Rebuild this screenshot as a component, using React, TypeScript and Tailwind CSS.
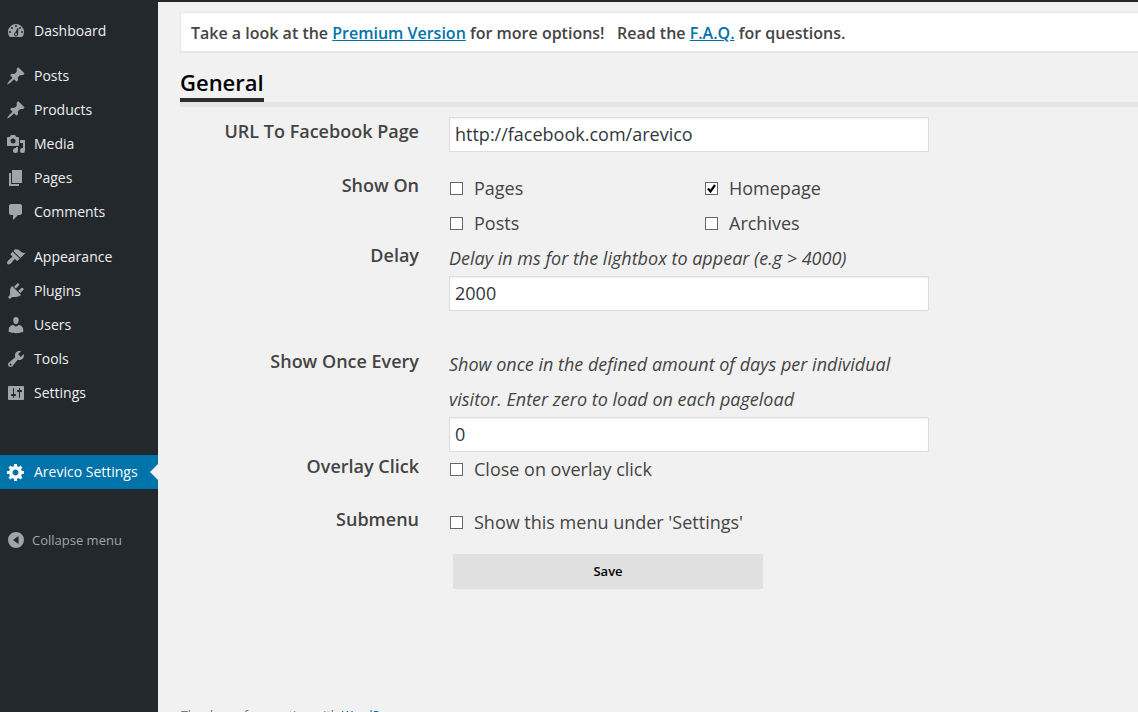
import { useState } from "react";
import type { ReactNode } from "react";

const ICONS = {
  dashboard:
    "M3.760 16h12.480A8 8 0 1 0 3.760 16zM10 4a1 1 0 1 1 0 2 1 1 0 0 1 0-2zM6 6a1 1 0 1 1 0 2 1 1 0 0 1 0-2zM14 6a1 1 0 1 1 0 2 1 1 0 0 1 0-2zM4 10a1 1 0 1 1 0 2 1 1 0 0 1 0-2zM16 10a1 1 0 1 1 0 2 1 1 0 0 1 0-2zM11.600 7l.9.3-.5 5.500a2 2 0 1 1-2.800-1.200zM10 12.200a1.100 1.100 0 1 0 .01 0z",
  pin: "M10.440 3.020l1.820-1.820 6.360 6.350-1.830 1.820c-1.050-.68-2.480-.57-3.410.36l-.75.75c-.92.93-1.040 2.350-.35 3.410l-1.830 1.820-2.410-2.410-2.800 2.790c-.42.42-3.380 2.710-3.800 2.290s1.860-3.390 2.280-3.810l2.790-2.790L4.100 9.360l1.830-1.820c1.050.69 2.480.57 3.400-.36l.75-.75c.93-.92 1.050-2.350.36-3.410z",
  media:
    "M13 11V4c0-.55-.45-1-1-1h-1.670L9 1H5L3.670 3H2c-.55 0-1 .45-1 1v7c0 .55.45 1 1 1h10c.55 0 1-.45 1-1zM7 4.500a2.500 2.500 0 1 1 0 5 2.500 2.500 0 0 1 0-5zM14 6h5v10.500a2.500 2.500 0 1 1-2-2.450V9h-3zM10 14.050V13h2v3.500a2.500 2.500 0 1 1-2-2.450z",
  page: "M6 15V2h10v13H6zm-1 1h8v2H3V5h2v11z",
  comment:
    "M5 2h9c1.100 0 2 .9 2 2v7c0 1.100-.9 2-2 2h-2l-5 5v-5H5c-1.100 0-2-.9-2-2V4c0-1.100.9-2 2-2z",
  appearance:
    "M14.480 11.060L7.410 3.990l1.500-1.500c.5-.56 2.300-.47 3.510.32 1.210.8 1.430 1.280 2.910 2.100 1.180.64 2.450 1.260 4.450.85zm-.71.71L6.700 4.700 4.930 6.470c-.39.39-.39 1.020 0 1.410l1.060 1.060c.39.39.39 1.030 0 1.420-.6.6-1.430 1.110-2.210 1.690-.35.26-.7.53-1.010.84C1.430 14.230.4 16.080 1.400 17.070c.99 1 2.840-.03 4.180-1.360.31-.31.58-.66.85-1.020.57-.78 1.080-1.610 1.690-2.210.39-.39 1.020-.39 1.410 0l1.060 1.060c.39.39 1.020.39 1.410 0z",
  plugin:
    "M13.110 4.360L9.870 7.600 8 5.730l3.240-3.240c.35-.34 1.050-.2 1.560.32.52.51.66 1.210.31 1.550zm-8 1.770l.91-1.120 9.010 9.010-1.190.84c-.71.71-2.630 1.160-3.820 1.160H6.140L4.900 17.260c-.59.59-1.540.59-2.120 0-.59-.58-.59-1.530 0-2.120l1.240-1.240v-3.880c0-1.130.4-3.190 1.090-3.890zm7.260 3.970l3.240-3.240c.34-.35 1.040-.21 1.550.31.52.51.66 1.210.31 1.550l-3.240 3.250z",
  user: "M10 9.250c-2.270 0-2.730-3.440-2.730-3.440C7 4.020 7.820 2 9.970 2c2.160 0 2.980 2.020 2.710 3.810 0 0-.41 3.440-2.680 3.440zm0 2.570L12.720 10c2.390 0 4.520 2.330 4.520 4.530v2.490s-3.650 1.130-7.240 1.130c-3.650 0-7.240-1.130-7.240-1.130v-2.490c0-2.250 1.940-4.480 4.470-4.480z",
  tool: "M16.680 9.770c-1.340 1.340-3.300 1.670-4.950.99l-5.410 6.520c-.99.99-2.590.99-3.580 0s-.99-2.590 0-3.570l6.520-5.420c-.68-1.650-.35-3.610.99-4.950 1.280-1.280 3.120-1.620 4.720-1.060l-2.890 2.890 2.820 2.820 2.860-2.870c.53 1.580.18 3.390-1.080 4.650zM3.810 16.210c.4.39 1.040.39 1.430 0 .4-.4.4-1.040 0-1.430-.39-.4-1.030-.4-1.430 0-.39.39-.39 1.030 0 1.430z",
  settings:
    "M18 16V4c0-.55-.45-1-1-1H3c-.55 0-1 .45-1 1v12c0 .55.45 1 1 1h14c.55 0 1-.45 1-1zM8 11h1c.55 0 1 .45 1 1s-.45 1-1 1H8v1.500c0 .28-.22.5-.5.5s-.5-.22-.5-.5V13H6c-.55 0-1-.45-1-1s.45-1 1-1h1V5.500c0-.28.22-.5.5-.5s.5.22.5.5V11zm5-2h-1c-.55 0-1-.45-1-1s.45-1 1-1h1V5.500c0-.28.22-.5.5-.5s.5.22.5.5V7h1c.55 0 1 .45 1 1s-.45 1-1 1h-1v5.500c0 .28-.22.5-.5.5s-.5-.22-.5-.5V9z",
  gear: "M18 12h-2.180c-.17.7-.44 1.350-.81 1.930l1.540 1.540-2.100 2.100-1.540-1.540c-.58.36-1.230.63-1.910.79V19H8v-2.180c-.68-.16-1.330-.43-1.910-.79l-1.540 1.540-2.120-2.120 1.540-1.540c-.36-.58-.63-1.230-.79-1.910H1V9.030h2.170c.16-.7.44-1.350.8-1.940L2.430 5.550l2.100-2.100 1.540 1.540c.58-.37 1.240-.64 1.930-.81V2h3v2.180c.68.16 1.330.43 1.910.79l1.540-1.540 2.120 2.120-1.540 1.540c.36.59.64 1.240.8 1.940H18V12zm-8.500 1.500c1.660 0 3-1.340 3-3s-1.340-3-3-3-3 1.340-3 3 1.340 3 3 3z",
  collapse: "M10 2a8 8 0 1 1 0 16 8 8 0 0 1 0-16zM12.500 6L7 10l5.500 4z",
};

type IconName = keyof typeof ICONS;

function Icon({ name }: { name: IconName }) {
  return (
    <svg viewBox="0 0 20 20" className="size-5 shrink-0" fill="currentColor" fillRule="evenodd" aria-hidden="true">
      <path d={ICONS[name]} />
    </svg>
  );
}

const MENU: { icon: IconName; label: string }[][] = [
  [{ icon: "dashboard", label: "Dashboard" }],
  [
    { icon: "pin", label: "Posts" },
    { icon: "pin", label: "Products" },
    { icon: "media", label: "Media" },
    { icon: "page", label: "Pages" },
    { icon: "comment", label: "Comments" },
  ],
  [
    { icon: "appearance", label: "Appearance" },
    { icon: "plugin", label: "Plugins" },
    { icon: "user", label: "Users" },
    { icon: "tool", label: "Tools" },
    { icon: "settings", label: "Settings" },
  ],
];

function Sidebar() {
  return (
    <nav className="w-[158px] shrink-0 bg-[#23282d] pt-3.5 text-sm text-[#eee]">
      <div className="flex flex-col gap-[11px]">
        {MENU.map((group, i) => (
          <ul key={i}>
            {group.map((item) => (
              <li key={item.label}>
                <a href="#" className="flex h-[34px] items-center gap-2 pl-1.5">
                  <span className="text-[#a0a5aa]">
                    <Icon name={item.icon} />
                  </span>
                  {item.label}
                </a>
              </li>
            ))}
          </ul>
        ))}
      </div>
      <a
        href="#"
        aria-current="page"
        className="relative mt-[45px] flex h-[34px] items-center gap-2 bg-[#0073aa] pl-1.5 text-white"
      >
        <Icon name="gear" />
        Arevico Settings
        <span className="absolute top-1/2 right-0 -translate-y-1/2 border-8 border-l-0 border-transparent border-r-[#f1f1f1]" />
      </a>
      <button
        type="button"
        className="mt-[34px] flex h-[34px] w-full items-center gap-1.5 pl-1.5 text-[13px] text-[#a0a5aa]"
      >
        <Icon name="collapse" />
        Collapse menu
      </button>
    </nav>
  );
}

function Row({ label, htmlFor, className, children }: { label: string; htmlFor?: string; className?: string; children: ReactNode }) {
  const labelClass = "w-[239px] shrink-0 text-right leading-[29px] font-semibold";
  return (
    <div className={`flex gap-[30px] ${className ?? ""}`}>
      {htmlFor ? (
        <label htmlFor={htmlFor} className={labelClass}>
          {label}
        </label>
      ) : (
        <div className={labelClass}>{label}</div>
      )}
      <div className="w-full max-w-[480px]">{children}</div>
    </div>
  );
}

function TextField({ id, value }: { id: string; value: string }) {
  return (
    <input
      id={id}
      type="text"
      defaultValue={value}
      className="block h-[35px] w-full border border-[#ddd] bg-white px-[5px] text-[#32373c] shadow-[inset_0_1px_2px_rgba(0,0,0,0.07)]"
    />
  );
}

function Check({ label, initial = false }: { label: string; initial?: boolean }) {
  const [checked, setChecked] = useState(initial);
  return (
    <label className="flex h-[35px] items-center gap-[11px]">
      <span className="relative ml-px size-[13px]">
        <input
          type="checkbox"
          checked={checked}
          onChange={(e) => setChecked(e.target.checked)}
          className="block size-[13px] appearance-none border border-[#666] bg-white"
        />
        {checked && (
          <svg viewBox="0 0 13 13" className="pointer-events-none absolute inset-0" aria-hidden="true">
            <path d="M3 6.500l2.500 3L10 3" fill="none" stroke="#000" strokeWidth="2.200" />
          </svg>
        )}
      </span>
      {label}
    </label>
  );
}

export default function App() {
  return (
    <div className="flex h-screen flex-col overflow-hidden bg-[#f1f1f1] font-['Open_Sans',sans-serif] text-[#444]">
      <div className="h-0.5 shrink-0 bg-[#23282d]" />
      <div className="-mt-0.5 flex min-h-0 flex-1">
        <Sidebar />
        <main className="min-w-0 flex-1 pt-3 pl-[22px]">
          <div className="border border-r-0 border-[#e5e5e5] bg-white px-2.5 pt-2 pb-1.5 text-base font-semibold shadow-[0_1px_1px_rgba(0,0,0,0.04)]">
            Take a look at the{" "}
            <a href="#" className="text-[#0073aa] underline">
              Premium Version
            </a>{" "}
            for more options! &nbsp; Read the{" "}
            <a href="#" className="text-[#0073aa] underline">
              F.A.Q.
            </a>{" "}
            for questions.
          </div>

          <div className="mt-3 flex border-b-[5px] border-[#e5e5e5]">
            <h2 className="border-b-4 border-[#2d2d2d] pt-0.5 text-[22px] leading-8 font-semibold text-black">General</h2>
          </div>

          <form className="mt-2.5 text-lg leading-[35px]" onSubmit={(e) => e.preventDefault()}>
            <Row label="URL To Facebook Page" htmlFor="url" className="pb-[19px]">
              <TextField id="url" value="http://facebook.com/arevico" />
            </Row>
            <Row label="Show On">
              <div className="grid grid-cols-[255px_1fr]">
                <Check label="Pages" />
                <Check label="Homepage" initial />
                <Check label="Posts" />
                <Check label="Archives" />
              </div>
            </Row>
            <Row label="Delay" htmlFor="delay" className="pb-9">
              <p className="italic">Delay in ms for the lightbox to appear (e.g &gt; 4000)</p>
              <TextField id="delay" value="2000" />
            </Row>
            <Row label="Show Once Every" htmlFor="once">
              <p className="italic">
                Show once in the defined amount of days per individual visitor. Enter zero to load on each pageload
              </p>
              <TextField id="once" value="0" />
            </Row>
            <Row label="Overlay Click" className="pb-[18px]">
              <Check label="Close on overlay click" />
            </Row>
            <Row label="Submenu" className="pb-3.5">
              <Check label="Show this menu under 'Settings'" />
            </Row>
            <button
              type="submit"
              className="ml-[273px] block h-[35px] w-[310px] rounded-xs bg-[#e0e0e0] text-[13px] font-semibold text-black"
            >
              Save
            </button>
          </form>

          <footer className="mt-[116px] text-[13px] leading-5 text-[#777] italic">
            Thank you for creating with{" "}
            <a href="#" className="text-[#0073aa]">
              WordPress
            </a>
            .
          </footer>
        </main>
      </div>
    </div>
  );
}
